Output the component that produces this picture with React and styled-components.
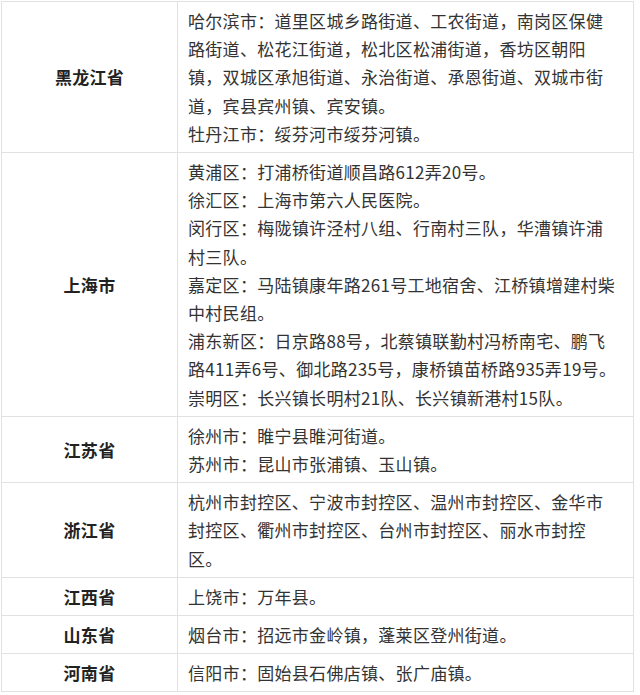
import React from "react";
import styled, { createGlobalStyle } from "styled-components";

const GlobalStyle = createGlobalStyle`
  html, body {
    margin: 0;
    padding: 0;
    background: #fff;
  }
  body {
    font-family: "Noto Sans CJK SC", "Noto Sans", sans-serif;
    color: #333;
  }
`;

const Page = styled.div`
  padding: 1px 0 0 1px;
`;

const Table = styled.table`
  width: 633px;
  border-collapse: collapse;
  table-layout: fixed;
`;

const Row = styled.tr``;

const ProvinceCell = styled.th`
  width: 175px;
  border: 1px solid #e1e1e1;
  font-size: 17px;
  font-weight: 700;
  color: #222;
  text-align: center;
  vertical-align: middle;
  letter-spacing: 0.3px;
  line-height: 28.2px;
  padding: 5px 0 4px;
`;

const DetailCell = styled.td`
  border: 1px solid #e1e1e1;
  padding: 5px 16px 4px 10px;
  font-size: 17px;
  letter-spacing: 0.3px;
  line-height: 28.2px;
  color: #333;
  vertical-align: middle;
`;

const Line = styled.p`
  margin: 0;
`;

const rows = [
  {
    province: "黑龙江省",
    lines: [
      "哈尔滨市：道里区城乡路街道、工农街道，南岗区保健路街道、松花江街道，松北区松浦街道，香坊区朝阳镇，双城区承旭街道、永治街道、承恩街道、双城市街道，宾县宾州镇、宾安镇。",
      "牡丹江市：绥芬河市绥芬河镇。",
    ],
  },
  {
    province: "上海市",
    lines: [
      "黄浦区：打浦桥街道顺昌路612弄20号。",
      "徐汇区：上海市第六人民医院。",
      "闵行区：梅陇镇许泾村八组、行南村三队，华漕镇许浦村三队。",
      "嘉定区：马陆镇康年路261号工地宿舍、江桥镇增建村柴中村民组。",
      "浦东新区：日京路88号，北蔡镇联勤村冯桥南宅、鹏飞路411弄6号、御北路235号，康桥镇苗桥路935弄19号。",
      "崇明区：长兴镇长明村21队、长兴镇新港村15队。",
    ],
  },
  {
    province: "江苏省",
    lines: ["徐州市：睢宁县睢河街道。", "苏州市：昆山市张浦镇、玉山镇。"],
  },
  {
    province: "浙江省",
    lines: [
      "杭州市封控区、宁波市封控区、温州市封控区、金华市封控区、衢州市封控区、台州市封控区、丽水市封控区。",
    ],
  },
  { province: "江西省", lines: ["上饶市：万年县。"] },
  { province: "山东省", lines: ["烟台市：招远市金岭镇，蓬莱区登州街道。"] },
  { province: "河南省", lines: ["信阳市：固始县石佛店镇、张广庙镇。"] },
];

export default function App() {
  return (
    <>
      <GlobalStyle />
      <Page>
        <Table>
          <tbody>
            {rows.map((r) => (
              <Row key={r.province}>
                <ProvinceCell>{r.province}</ProvinceCell>
                <DetailCell>
                  {r.lines.map((l, i) => (
                    <Line key={i}>{l}</Line>
                  ))}
                </DetailCell>
              </Row>
            ))}
          </tbody>
        </Table>
      </Page>
    </>
  );
}
